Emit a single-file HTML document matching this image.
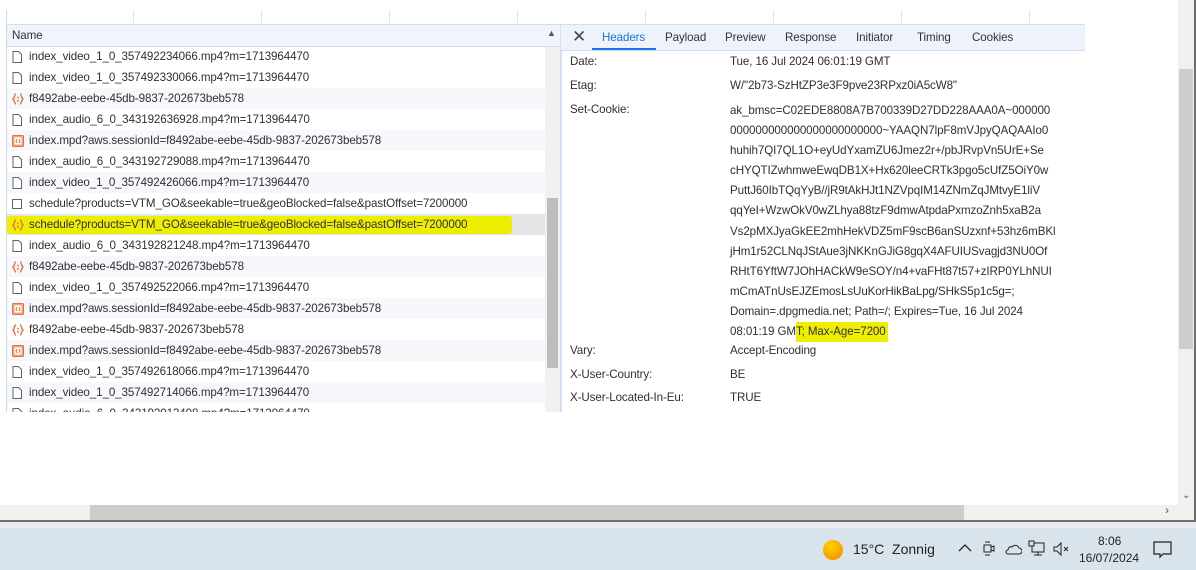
<!DOCTYPE html>
<html><head><meta charset="utf-8"><style>
*{margin:0;padding:0;box-sizing:border-box}
body{width:1196px;height:570px;overflow:hidden;background:#fff;font-family:"Segoe UI","Liberation Sans",sans-serif;font-size:11.6px;letter-spacing:-0.1px;color:#303030;position:relative}
.a{position:absolute}
.vl{position:absolute;top:0;height:23px;width:1px;background:#dde6f2}
.row{position:absolute;left:7px;width:538px;height:21px;line-height:22px;padding-left:22px;white-space:nowrap}
.row.l{background:#f6f8fc}
.ic{position:absolute;left:5px;top:5px;width:10px;height:12px}
.lab{position:absolute;left:570px;white-space:nowrap}
.val{position:absolute;left:730px;white-space:nowrap}
.tab{position:absolute;top:24px;height:26px;line-height:28px;color:#333}
</style></head><body>
<div class="a" style="left:6px;top:10px;width:1px;height:402px;background:#c6d9f3"></div>
<div class="vl" style="left:133px;top:10px;height:13px"></div><div class="vl" style="left:261px;top:10px;height:13px"></div><div class="vl" style="left:389px;top:10px;height:13px"></div><div class="vl" style="left:517px;top:10px;height:13px"></div><div class="vl" style="left:645px;top:10px;height:13px"></div><div class="vl" style="left:773px;top:10px;height:13px"></div><div class="vl" style="left:901px;top:10px;height:13px"></div><div class="vl" style="left:1029px;top:10px;height:13px"></div>
<div class="a" style="left:7px;top:24px;width:554px;height:23px;background:#f1f4fa;border-top:1px solid #cfe0f5;border-bottom:1px solid #cfe0f5"></div>
<div class="a" style="left:12px;top:29px;color:#333">Name</div>
<div class="a" style="left:547px;top:28px;font-size:9px;color:#555">▲</div>
<div class="a" style="left:545px;top:47px;width:15px;height:365px;background:#f1f1f1"></div>
<div class="a" style="left:547px;top:198px;width:11px;height:170px;background:#bdbdbd"></div>
<div class="a" style="left:560px;top:24px;width:1px;height:388px;background:#cfe0f5"></div>
<div class="a" style="left:7px;top:47px;width:538px;height:365px;overflow:hidden">
<div style="position:relative;left:-7px;top:-47px">
<svg width="0" height="0" style="position:absolute"><defs>
<symbol id="doc" viewBox="0 0 10 12"><path d="M1 .5h5.5l3 3v8h-8.5z" fill="#fff" stroke="#5f6368"/></symbol>
<symbol id="js" viewBox="0 0 12 12"><path d="M4 1C2 1 3 5 1 6c2 1 1 5 3 5M8 1c2 0 1 4 3 5-2 1-1 5-3 5" fill="none" stroke="#e8713a" stroke-width="1.4"/><circle cx="6" cy="4.5" r=".9" fill="#e8713a"/><path d="M6 6.5v2.5" stroke="#e8713a" stroke-width="1.3"/></symbol>
<symbol id="mpd" viewBox="0 0 12 12"><rect x=".5" y=".5" width="11" height="11" rx="1" fill="#f0a57f" stroke="#e8713a"/><rect x="2.5" y="2.5" width="7" height="7" fill="#fff"/><path d="M5 4L4 6l1 2M7 4l1 2-1 2" stroke="#e8713a" fill="none"/></symbol>
<symbol id="box" viewBox="0 0 10 12"><rect x=".5" y="1.5" width="9" height="9" fill="#fff" stroke="#5f6368"/></symbol>
</defs></svg>
<div class="row" style="top:46px"><svg class="ic"><use href="#doc"/></svg>index_video_1_0_357492234066.mp4?m=1713964470</div>
<div class="row" style="top:67px"><svg class="ic"><use href="#doc"/></svg>index_video_1_0_357492330066.mp4?m=1713964470</div>
<div class="row l" style="top:88px"><svg class="ic" style="width:12px"><use href="#js"/></svg>f8492abe-eebe-45db-9837-202673beb578</div>
<div class="row" style="top:109px"><svg class="ic"><use href="#doc"/></svg>index_audio_6_0_343192636928.mp4?m=1713964470</div>
<div class="row l" style="top:130px"><svg class="ic" style="width:12px"><use href="#mpd"/></svg>index.mpd?aws.sessionId=f8492abe-eebe-45db-9837-202673beb578</div>
<div class="row" style="top:151px"><svg class="ic"><use href="#doc"/></svg>index_audio_6_0_343192729088.mp4?m=1713964470</div>
<div class="row l" style="top:172px"><svg class="ic"><use href="#doc"/></svg>index_video_1_0_357492426066.mp4?m=1713964470</div>
<div class="row" style="top:193px"><svg class="ic"><use href="#box"/></svg>schedule?products=VTM_GO&amp;seekable=true&amp;geoBlocked=false&amp;pastOffset=7200000</div>
<div class="row" style="top:214px;background:#e4e5e6"><div class="a" style="left:0;top:2px;width:505px;height:18px;background:#eeee00;border-radius:3px"></div><svg class="ic" style="width:12px"><use href="#js"/></svg><span style="position:relative">schedule?products=VTM_GO&amp;seekable=true&amp;geoBlocked=false&amp;pastOffset=7200000</span></div>
<div class="row" style="top:235px"><svg class="ic"><use href="#doc"/></svg>index_audio_6_0_343192821248.mp4?m=1713964470</div>
<div class="row l" style="top:256px"><svg class="ic" style="width:12px"><use href="#js"/></svg>f8492abe-eebe-45db-9837-202673beb578</div>
<div class="row" style="top:277px"><svg class="ic"><use href="#doc"/></svg>index_video_1_0_357492522066.mp4?m=1713964470</div>
<div class="row l" style="top:298px"><svg class="ic" style="width:12px"><use href="#mpd"/></svg>index.mpd?aws.sessionId=f8492abe-eebe-45db-9837-202673beb578</div>
<div class="row" style="top:319px"><svg class="ic" style="width:12px"><use href="#js"/></svg>f8492abe-eebe-45db-9837-202673beb578</div>
<div class="row l" style="top:340px"><svg class="ic" style="width:12px"><use href="#mpd"/></svg>index.mpd?aws.sessionId=f8492abe-eebe-45db-9837-202673beb578</div>
<div class="row" style="top:361px"><svg class="ic"><use href="#doc"/></svg>index_video_1_0_357492618066.mp4?m=1713964470</div>
<div class="row l" style="top:382px"><svg class="ic"><use href="#doc"/></svg>index_video_1_0_357492714066.mp4?m=1713964470</div>
<div class="row" style="top:403px"><svg class="ic"><use href="#doc"/></svg>index_audio_6_0_343192913408.mp4?m=1713964470</div>
</div></div>
<div class="a" style="left:561px;top:24px;width:524px;height:27px;background:#eef3fb;border-top:1px solid #cfe0f5;border-bottom:1px solid #cfe0f5"></div>
<div class="a" style="left:572px;top:27px;font-size:17px;color:#444">✕</div>
<div class="tab" style="left:602px;color:#1a73e8">Headers</div>
<div class="a" style="left:592px;top:48px;width:64px;height:2px;background:#1a73e8"></div>
<div class="tab" style="left:665px">Payload</div>
<div class="tab" style="left:725px">Preview</div>
<div class="tab" style="left:785px">Response</div>
<div class="tab" style="left:856px">Initiator</div>
<div class="tab" style="left:917px">Timing</div>
<div class="tab" style="left:972px">Cookies</div>
<div class="a" style="left:561px;top:51px;width:1px;height:361px;background:#cfe0f5"></div>
<div class="lab" style="top:55px">Date:</div><div class="val" style="top:55px">Tue, 16 Jul 2024 06:01:19 GMT</div>
<div class="lab" style="top:79px">Etag:</div><div class="val" style="top:79px">W/"2b73-SzHtZP3e3F9pve23RPxz0iA5cW8"</div>
<div class="lab" style="top:103px">Set-Cookie:</div>
<div class="val" style="top:101px;line-height:20.1px">ak_bmsc=C02EDE8808A7B700339D27DD228AAA0A~000000<br>000000000000000000000000~YAAQN7lpF8mVJpyQAQAAIo0<br>huhih7QI7QL1O+eyUdYxamZU6Jmez2r+/pbJRvpVn5UrE+Se<br>cHYQTIZwhmweEwqDB1X+Hx620leeCRTk3pgo5cUfZ5OiY0w<br>PuttJ60IbTQqYyB//jR9tAkHJt1NZVpqIM14ZNmZqJMtvyE1liV<br>qqYeI+WzwOkV0wZLhya88tzF9dmwAtpdaPxmzoZnh5xaB2a<br>Vs2pMXJyaGkEE2mhHekVDZ5mF9scB6anSUzxnf+53hz6mBKl<br>jHm1r52CLNqJStAue3jNKKnGJiG8gqX4AFUIUSvagjd3NU0Of<br>RHtT6YftW7JOhHACkW9eSOY/n4+vaFHt87t57+zIRP0YLhNUI<br>mCmATnUsEJZEmosLsUuKorHikBaLpg/SHkS5p1c5g=;<br>Domain=.dpgmedia.net; Path=/; Expires=Tue, 16 Jul 2024<br>08:01:19 GM<span style="background:#eeee00;padding:3px 2px 4px 0">T; Max-Age=7200</span></div>
<div class="lab" style="top:344px">Vary:</div><div class="val" style="top:344px">Accept-Encoding</div>
<div class="lab" style="top:368px">X-User-Country:</div><div class="val" style="top:368px">BE</div>
<div class="lab" style="top:391px">X-User-Located-In-Eu:</div><div class="val" style="top:391px">TRUE</div>
<div class="a" style="left:1178px;top:0;width:16px;height:505px;background:#f0f0f0"></div>
<div class="a" style="left:1179px;top:69px;width:14px;height:280px;background:#cdcdcd"></div>
<div class="a" style="left:1182px;top:490px;font-size:10px;color:#555">⌄</div>
<div class="a" style="left:1194px;top:0;width:2px;height:522px;background:#6e6e6e"></div>
<div class="a" style="left:0;top:505px;width:1194px;height:15px;background:#f0f0f0"></div>
<div class="a" style="left:90px;top:505px;width:874px;height:15px;background:#cdcdcd"></div>
<div class="a" style="left:1165px;top:503px;font-size:12px;color:#555">›</div>
<div class="a" style="left:0;top:520px;width:1196px;height:2px;background:#6e6e6e"></div>
<div class="a" style="left:0;top:522px;width:1196px;height:6px;background:#e8ecf0"></div>
<div class="a" style="left:0;top:528px;width:1196px;height:42px;background:#d9e3ec"></div>
<div class="a" style="left:823px;top:540px;width:20px;height:20px;border-radius:50%;background:radial-gradient(circle at 40% 30%,#ffd000,#f08a00)"></div>
<div class="a" style="left:853px;top:541px;font-size:14px;letter-spacing:0;color:#222">15°C&nbsp; Zonnig</div>
<svg class="a" style="left:957px;top:543px" width="16" height="10"><path d="M2 8l6-6 6 6" fill="none" stroke="#222" stroke-width="1.3"/></svg>
<svg class="a" style="left:982px;top:540px" width="14" height="18"><rect x="2" y="5" width="7" height="7" fill="none" stroke="#222"/><path d="M9 7l3-1v5l-3-1M3 2h5M3 15h5" fill="none" stroke="#222"/></svg>
<svg class="a" style="left:1004px;top:543px" width="18" height="12"><path d="M4 11h11a3 3 0 0 0 0-6 4 4 0 0 0-7-1 3 3 0 0 0-4 3 2 2 0 0 0 0 4z" fill="none" stroke="#222"/></svg>
<svg class="a" style="left:1028px;top:540px" width="18" height="18"><rect x="4" y="3" width="12" height="9" fill="none" stroke="#222"/><rect x="1" y="1" width="5" height="5" fill="#d9e3ec" stroke="#222"/><path d="M10 12v3M6 15h8" stroke="#222"/></svg>
<svg class="a" style="left:1052px;top:541px" width="18" height="16"><path d="M2 6h3l4-4v12l-4-4H2z" fill="none" stroke="#222"/><path d="M12 6l4 4M16 6l-4 4" stroke="#222"/></svg>
<div class="a" style="left:1098px;top:534px;font-size:12px;letter-spacing:0;color:#222">8:06</div>
<div class="a" style="left:1079px;top:551px;font-size:12px;letter-spacing:0;color:#222">16/07/2024</div>
<svg class="a" style="left:1153px;top:541px" width="20" height="18"><path d="M1 1h17v12H10l-3 3v-3H1z" fill="none" stroke="#222" stroke-width="1.2"/></svg>
</body></html>
